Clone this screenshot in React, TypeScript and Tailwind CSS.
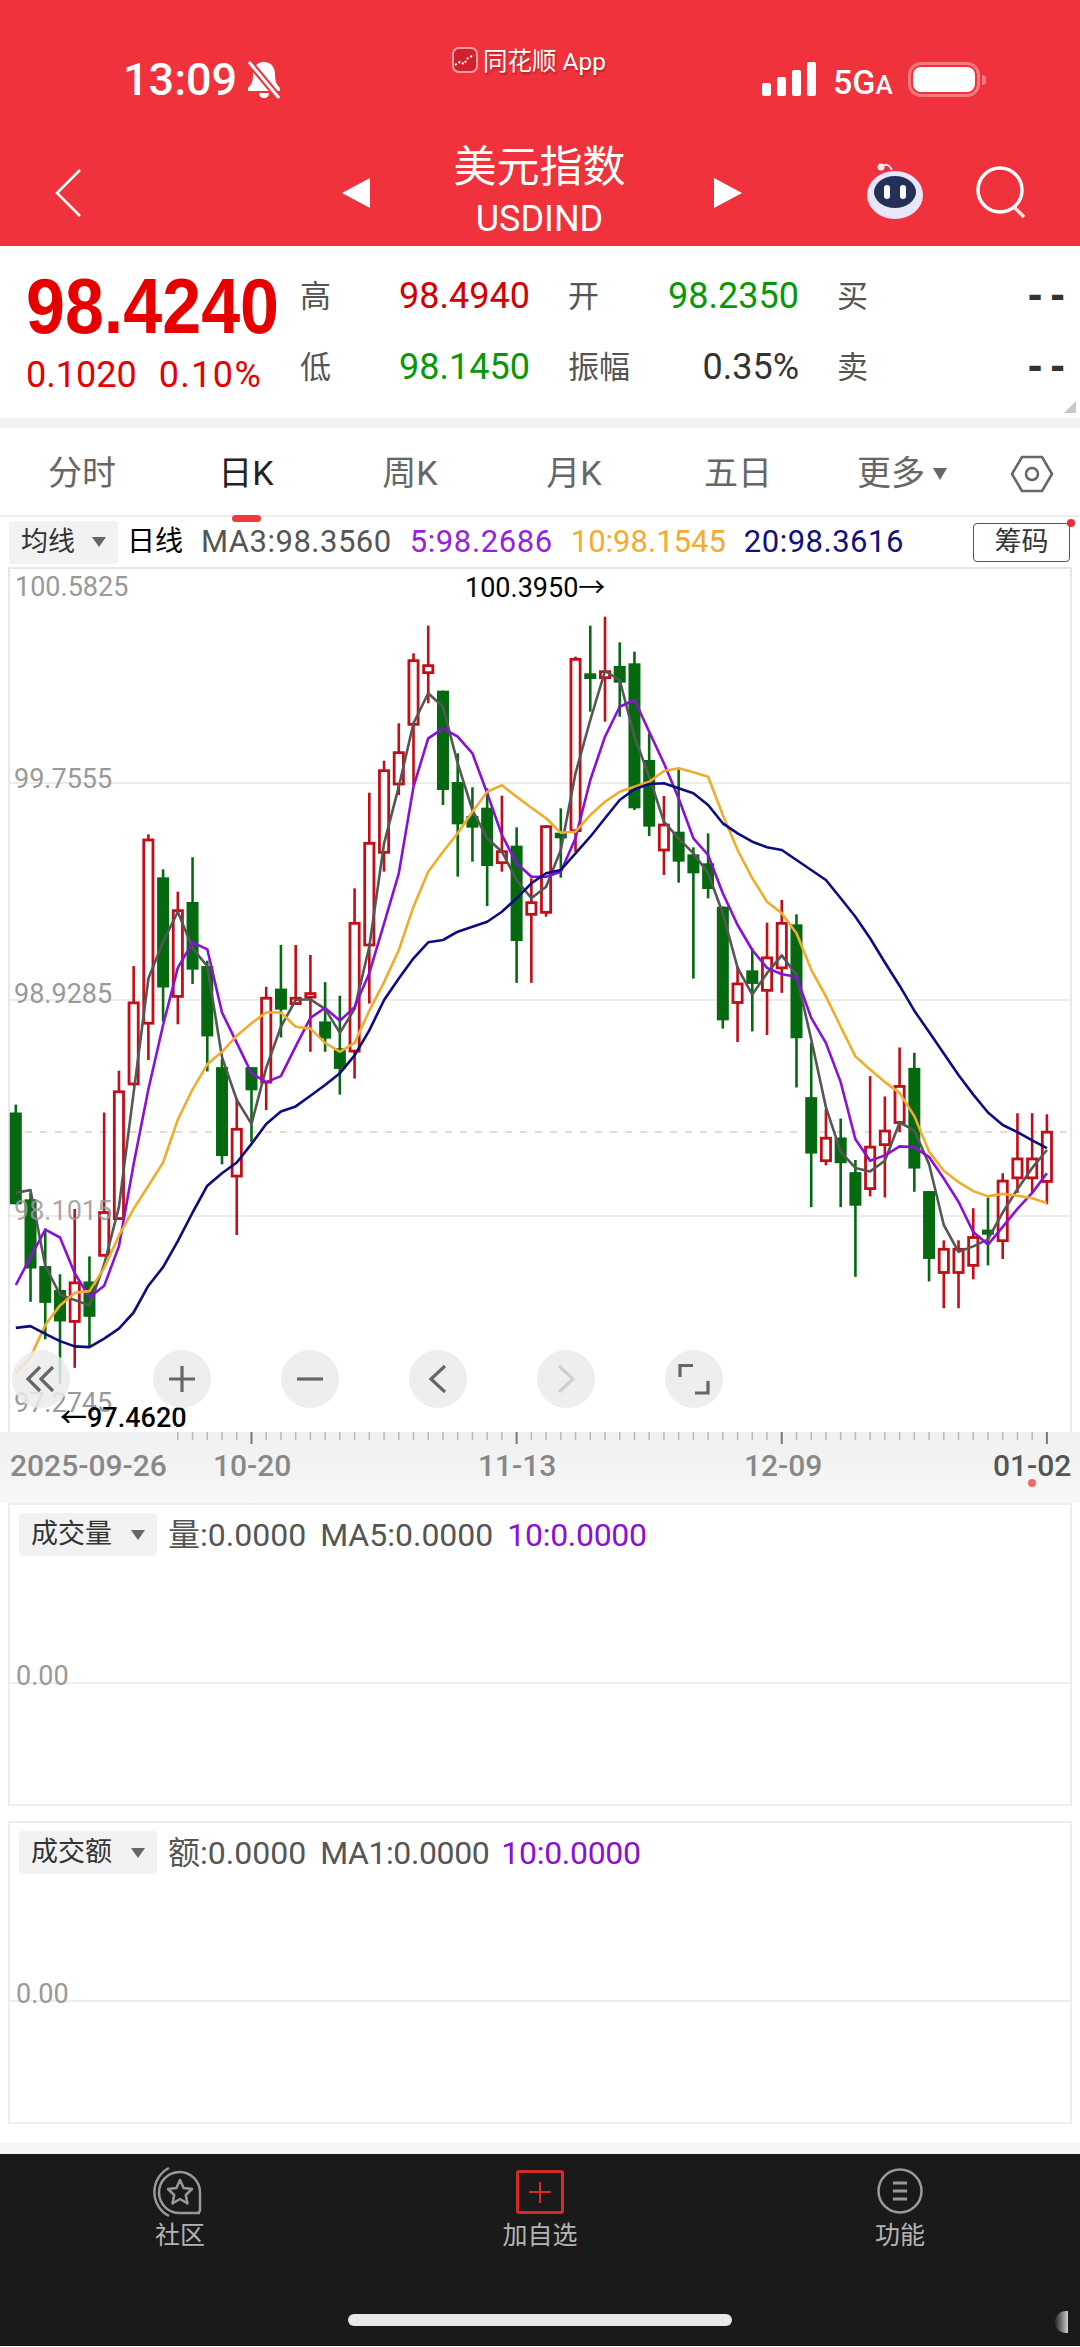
// y positions were read off two crops of the chart, so keep both scales around
const u = (z: number) => 510 + z / 3;
const v = (z: number) => 950 + z / 2.8;
const cx = (i: number) => 15.8 + i * 14.73;

type Candle = [up: boolean, high: number, top: number, bottom: number, low: number];

const candles: Candle[] = [
  [false, v(433), v(455), v(712), v(712)],
  [false, v(680), v(698), v(892), v(985)],
  [false, v(780), v(885), v(988), v(1090)],
  [false, v(908), v(952), v(1040), v(1215)],
  [true, v(725), v(932), v(1040), v(1170)],
  [false, v(858), v(928), v(1027), v(1112)],
  [true, v(455), v(735), v(855), v(855)],
  [true, v(338), v(397), v(752), v(752)],
  [true, v(45), v(148), v(375), v(380)],
  [true, u(973), u(990), v(205), v(308)],
  [false, u(1078), u(1102), v(105), v(200)],
  [true, u(1145), u(1202), v(130), v(208)],
  [false, u(1042), u(1176), v(55), v(95)],
  [false, v(30), v(45), v(242), v(340)],
  [false, v(305), v(328), v(577), v(600)],
  [true, v(415), v(502), v(633), v(798)],
  [false, v(328), v(328), v(393), v(538)],
  [true, v(103), v(135), v(370), v(448)],
  [false, u(1305), v(108), v(167), v(245)],
  [true, u(1305), v(135), v(150), v(150)],
  [true, u(1335), v(122), v(132), v(285)],
  [false, v(90), v(200), v(248), v(285)],
  [false, v(128), v(275), v(333), v(405)],
  [true, u(1135), u(1240), v(283), v(360)],
  [true, u(848), u(1000), u(1305), v(150)],
  [true, u(752), u(782), u(1027), u(1085)],
  [true, u(640), u(728), u(822), u(855)],
  [true, u(430), u(452), u(643), u(825)],
  [true, u(347), u(467), u(488), u(580)],
  [false, u(542), u(542), u(840), u(885)],
  [false, u(730), u(816), u(943), u(1100)],
  [false, u(832), u(918), u(953), u(1055)],
  [false, u(835), u(893), u(1068), u(1188)],
  [true, u(857), u(1025), u(1058), u(1085)],
  [false, u(952), u(1007), u(1293), v(92)],
  [true, u(1105), u(1178), u(1213), v(92)],
  [true, u(945), u(950), u(1207), u(1220)],
  [false, u(895), u(968), u(985), u(1103)],
  [true, u(440), u(448), u(962), u(1025)],
  [false, u(347), u(490), u(507), u(605)],
  [true, u(320), u(485), u(503), u(635)],
  [false, u(397), u(468), u(518), u(620)],
  [false, u(425), u(460), u(895), u(900)],
  [false, u(670), u(750), u(950), u(978)],
  [true, u(858), u(945), u(1020), u(1095)],
  [false, u(778), u(965), u(1055), u(1118)],
  [false, u(1012), u(1033), u(1090), v(80)],
  [false, u(970), u(1060), u(1137), u(1165)],
  [false, u(1190), u(1190), v(197), v(220)],
  [true, v(45), v(95), v(147), v(258)],
  [false, u(1315), v(57), v(95), v(228)],
  [true, u(1238), v(22), v(113), v(238)],
  [true, u(1170), u(1240), v(50), v(120)],
  [false, u(1213), u(1243), v(247), v(385)],
  [false, v(260), v(412), v(570), v(720)],
  [true, v(445), v(527), v(590), v(603)],
  [false, v(472), v(525), v(597), v(720)],
  [false, v(588), v(622), v(716), v(915)],
  [true, v(353), v(552), v(668), v(690)],
  [true, v(410), v(507), v(545), v(693)],
  [true, v(273), v(382), v(483), v(510)],
  [false, v(288), v(330), v(612), v(677)],
  [false, v(675), v(675), v(865), v(928)],
  [true, v(813), v(838), v(903), v(1003)],
  [true, v(813), v(838), v(903), v(1003)],
  [true, v(723), v(805), v(883), v(922)],
  [false, v(693), v(783), v(797), v(883)],
  [true, v(625), v(647), v(814), v(865)],
  [true, v(457), v(585), v(638), v(680)],
  [true, v(457), v(585), v(638), v(680)],
  [true, v(460), v(510), v(648), v(712)],
];

const ma3 = [
  v(680), v(672), v(885), v(965), v(980), v(995), v(880), v(720), v(400), v(80),
  u(1295), u(1205), u(1315), v(45), v(300), v(420), v(487), v(330), v(215), v(140),
  v(138), v(165), v(232), v(165), u(1310), u(1000), u(830), u(640), u(550), u(590),
  u(760), u(900), u(985), u(1025), u(1110), u(1165), u(1130), u(1020), u(790), u(630),
  u(483), u(510), u(680), u(800), u(935), u(985), u(1030), u(1090), u(1210), v(50),
  v(125), v(65), v(15), v(70), v(250), v(440), v(565), v(610), v(620), v(590),
  v(483), v(505), v(600), v(770), v(845), v(830), v(810), v(735), v(670), v(610), v(560),
];

const ma5 = [
  v(938), v(860), v(783), v(805), v(905), v(972), v(940), v(830), v(600), v(390),
  v(210), v(50), u(1297), u(1318), v(175), v(260), v(345), v(370), v(353), v(270),
  v(190), v(162), v(198), v(160), v(65), u(1240), u(1090), u(830), u(685), u(655),
  u(680), u(730), u(850), u(975), u(1060), u(1100), u(1100), u(1085), u(985), u(810),
  u(680), u(590), u(570), u(665), u(760), u(865), u(985), u(1035), u(1150), u(1245),
  u(1320), v(50), v(68), v(75), v(190), v(260), v(370), v(530), v(590), v(575),
  v(550), v(552), v(580), v(640), v(705), v(790), v(825), v(775), v(725), v(680), v(625),
];

const ma10 = [
  v(1185), v(1140), v(1050), v(995), v(960), v(955), v(890), v(800), v(725), v(660),
  v(595), v(475), v(390), v(320), v(285), v(240), v(205), v(175), v(175), v(215),
  v(220), v(260), v(285), v(260), v(170), v(90), v(0), u(1190), u(1085), u(1025),
  u(970), u(905), u(845), u(826), u(860), u(893), u(925), u(968), u(965), u(915),
  u(875), u(845), u(830), u(815), u(783), u(775), u(787), u(800), u(915), u(1020),
  u(1105), u(1175), u(1210), u(1270), v(55), v(130), v(215), v(298), v(335), v(370),
  v(400), v(465), v(565), v(618), v(650), v(675), v(690), v(683), v(688), v(695), v(708),
];

const ma20 = [
  v(1058), v(1053), v(1075), v(1095), v(1110), v(1112), v(1088), v(1060), v(1015), v(940),
  v(888), v(815), v(735), v(660), v(625), v(595), v(543), v(487), v(452), v(438),
  v(408), v(378), v(345), v(295), v(225), v(140), v(80), u(1345), u(1297), u(1290),
  u(1265), u(1250), u(1235), u(1205), u(1165), u(1120), u(1090), u(1080), u(1030), u(980),
  u(925), u(870), u(838), u(822), u(820), u(835), u(850), u(885), u(940), u(970),
  u(995), u(1012), u(1020), u(1050), u(1080), u(1110), u(1165), u(1220), u(1285), v(35),
  v(100), v(170), v(230), v(290), v(350), v(405), v(455), v(490), v(510), v(533), v(555),
];

const pts = (ys: number[]) => ys.map((y, i) => `${cx(i).toFixed(1)},${y.toFixed(1)}`).join(" ");

function CandleChart() {
  return (
    <svg viewBox="0 567 1080 865" className="block h-[865px] w-[1080px]">
      <rect x="9" y="568" width="1062" height="880" fill="none" stroke="#e8e8e8" strokeWidth="2" />
      <line x1="10" x2="1070" y1="783" y2="783" stroke="#e6e6e6" strokeWidth="1.5" />
      <line x1="10" x2="1070" y1="1000" y2="1000" stroke="#e6e6e6" strokeWidth="1.5" />
      <line x1="10" x2="1070" y1="1216" y2="1216" stroke="#e6e6e6" strokeWidth="1.5" />
      <line x1="10" x2="1070" y1="1132" y2="1132" stroke="#dcb596" strokeWidth="1.2" strokeDasharray="7 8" />
      {candles.map(([up, high, top, bottom, low], i) => {
        const color = up ? "#c20e16" : "#056a0f";
        const x = cx(i);
        return (
          <g key={i}>
            <line x1={x} x2={x} y1={high} y2={low} stroke={color} strokeWidth="2.6" />
            {up ? (
              <rect x={x - 4.6} y={top} width="9.2" height={bottom - top} fill="#fff" stroke={color} strokeWidth="2.8" />
            ) : (
              <rect x={x - 6} y={top} width="12" height={bottom - top} fill={color} />
            )}
          </g>
        );
      })}
      <polyline points={pts(ma3)} fill="none" stroke="#565656" strokeWidth="2.6" strokeLinejoin="round" />
      <polyline points={pts(ma5)} fill="none" stroke="#8a10d8" strokeWidth="2.6" strokeLinejoin="round" />
      <polyline points={pts(ma10)} fill="none" stroke="#f0ac2a" strokeWidth="2.6" strokeLinejoin="round" />
      <polyline points={pts(ma20)} fill="none" stroke="#0b0b82" strokeWidth="2.6" strokeLinejoin="round" />
    </svg>
  );
}

function XAxis() {
  const ticks = candles.map((_, i) => i).filter((i) => i >= 11);
  return (
    <div className="h-[71px] bg-gradient-to-b from-[#f0f0f0] to-[#f7f7f7]">
      <svg viewBox="0 1432 1080 71" className="block h-[71px] w-[1080px]">
        {ticks.map((i) => {
          const major = i === 16 || i === 34 || i === 52 || i === 70;
          return (
            <line
              key={i}
              x1={cx(i)}
              x2={cx(i)}
              y1="1432"
              y2={major ? 1444 : 1440}
              stroke={major ? "#777" : "#b8b8b8"}
              strokeWidth={major ? 2 : 1.5}
            />
          );
        })}
        <circle cx="1032" cy="1483" r="4" fill="#f0686a" />
      </svg>
    </div>
  );
}

function DropBox({ label, width }: { label: string; width: string }) {
  return (
    <div className={`flex h-[43px] items-center justify-between rounded-[4px] bg-[#f2f2f2] pl-[12px] pr-[12px] text-[27px] text-[#333] ${width}`}>
      <span>{label}</span>
      <svg width="14" height="10" viewBox="0 0 14 10">
        <polygon points="0,0 14,0 7,10" fill="#666" />
      </svg>
    </div>
  );
}

function Panel({ label, stat, ma, maClass, tenClass }: { label: string; stat: string; ma: string; maClass: string; tenClass: string }) {
  return (
    <div className="relative mx-[8px] h-[303px] w-[1064px] border-2 border-[#eeeeee] bg-white">
      <div className="flex items-center pl-[9px] pt-[7px] text-[32px] leading-[43px] text-[#555]">
        <DropBox label={label} width="w-[138px]" />
        <span className="ml-[11px] mt-[2px]">{stat}</span>
        <span className={`ml-[14px] mt-[2px] ${maClass}`}>{ma}</span>
        <span className={`mt-[2px] tracking-[-0.3px] text-[#8a10d8] ${tenClass}`}>10:0.0000</span>
      </div>
      <div className="absolute left-0 right-0 top-[177px] h-[2px] bg-[#eeeeee]" />
      <span className="absolute left-[6px] top-[155px] text-[27px] leading-[32px] text-[#999]">0.00</span>
    </div>
  );
}

export default function App() {
  return (
    <div className="h-[2347px] w-[1080px] overflow-hidden bg-white [font-family:Roboto,'Noto_Sans_CJK_SC',sans-serif]">
      {/* red header */}
      <header className="h-[246px] bg-[#f0323c] text-white">
        <div className="flex h-[140px]">
          <div className="flex w-[430px] items-start pl-[123px] pt-[54px]">
            <span className="text-[45px] font-medium leading-[52px]">13:09</span>
            <svg width="38" height="40" viewBox="0 0 38 40" className="ml-[8px] mt-[6px]">
              <path d="M19 2c-7 0-11 5-11 12 0 8-2 11-5 14v3h32v-3c-3-3-5-6-5-14 0-7-4-12-11-12z" fill="#fff" />
              <path d="M14 33c0 3 2 5 5 5s5-2 5-5z" fill="#fff" />
              <line x1="4" y1="2" x2="34" y2="38" stroke="#f0323c" strokeWidth="7" />
              <line x1="4" y1="2" x2="34" y2="38" stroke="#fff" strokeWidth="3" />
            </svg>
          </div>
          <div className="flex w-[280px] items-start pl-[22px] pt-[47px]">
            <svg width="26" height="26" viewBox="0 0 26 26">
              <rect x="1" y="1" width="24" height="24" rx="6" fill="#d3202a" stroke="#f9a0a4" strokeWidth="2" />
              <path d="M3 18l5-3 4 2 4-6 6-3" fill="none" stroke="#fff" strokeWidth="2" strokeDasharray="2 2" />
            </svg>
            <span className="ml-[5px] text-[24.5px] leading-[30px] [text-shadow:1px_2px_2px_rgba(120,0,0,0.45)]">同花顺 App</span>
          </div>
          <div className="flex flex-1 items-start pl-[52px] pt-[62px]">
            <div className="flex h-[34px] items-end gap-[6px]">
              <span className="h-[13px] w-[9px] rounded-[2px] bg-white" />
              <span className="h-[19px] w-[9px] rounded-[2px] bg-white" />
              <span className="h-[26px] w-[9px] rounded-[2px] bg-white" />
              <span className="h-[34px] w-[9px] rounded-[2px] bg-white" />
            </div>
            <span className="ml-[17px] mt-[1px] text-[34px] font-medium leading-[38px]">
              5G<span className="text-[26px]">A</span>
            </span>
            <div className="ml-[15px] flex items-center">
              <div className="h-[35px] w-[72px] rounded-[13px] border-[3px] border-[#f7787f] p-[2px]">
                <div className="h-full rounded-[8px] bg-white" />
              </div>
              <div className="ml-[2px] h-[10px] w-[4px] rounded-r-[3px] bg-[#f7787f]" />
            </div>
          </div>
        </div>
        <div className="flex h-[106px] items-center">
          <div className="flex w-[342px] items-center pl-[54px]">
            <svg width="28" height="50" viewBox="0 0 28 50">
              <polyline points="26,2 3,25 26,48" fill="none" stroke="#fff" strokeWidth="2.5" />
            </svg>
          </div>
          <svg width="28" height="30" viewBox="0 0 28 30">
            <polygon points="28,0 28,30 0,15" fill="#fff" />
          </svg>
          <div className="flex w-[344px] flex-col items-center pr-[5px]">
            <span className="mt-[-5px] text-[43px] leading-[50px]">美元指数</span>
            <span className="mt-[7px] text-[36px] leading-[40px]">USDIND</span>
          </div>
          <svg width="28" height="30" viewBox="0 0 28 30">
            <polygon points="0,0 0,30 28,15" fill="#fff" />
          </svg>
          <svg width="62" height="58" viewBox="0 0 62 58" className="ml-[122px] mt-[-5px]">
            <path d="M18 8c-1-5 5-7 8-3l2 3" fill="none" stroke="#e8e4f6" strokeWidth="2" />
            <circle cx="17" cy="5" r="3.5" fill="#eceaf8" />
            <ellipse cx="31" cy="33" rx="28" ry="24" fill="#e8e6f8" />
            <ellipse cx="31" cy="30" rx="21" ry="16" fill="#243055" />
            <rect x="20" y="23" width="6" height="14" rx="3" fill="#fff" />
            <rect x="36" y="23" width="6" height="14" rx="3" fill="#fff" />
          </svg>
          <svg width="54" height="54" viewBox="0 0 54 54" className="ml-[50px]">
            <circle cx="24" cy="24" r="22" fill="none" stroke="#fff" strokeWidth="3.5" />
            <line x1="38" y1="41" x2="48" y2="51" stroke="#ffe3e3" strokeWidth="3.5" />
          </svg>
        </div>
      </header>

      {/* quote block */}
      <section className="relative flex h-[172px]">
        <div className="w-[300px] pl-[26px] pt-[24px] text-[#e60000]">
          <div className="origin-center scale-y-[1.12] text-[70px] font-bold leading-[72px] [font-family:'Liberation_Sans',sans-serif]">98.4240</div>
          <div className="mt-[13px] flex text-[36px] leading-[40px]">
            <span>0.1020</span>
            <span className="ml-[22px] tracking-[1.4px]">0.10%</span>
          </div>
        </div>
        <div className="flex flex-col pt-[15px] text-[36px] leading-[71px]">
          {[
            ["高", "98.4940", "text-[#d40000]", "开", "98.2350", "text-[#059a05]", "买"],
            ["低", "98.1450", "text-[#059a05]", "振幅", "0.35%", "text-[#333]", "卖"],
          ].map(([a, b, bc, c, d, dc, e]) => (
            <div key={a} className="flex h-[71px] items-center">
              <div className="flex w-[230px] justify-between">
                <span className="text-[31px] text-[#555]">{a}</span>
                <span className={bc}>{b}</span>
              </div>
              <div className="ml-[38px] flex w-[231px] justify-between">
                <span className="text-[31px] text-[#555]">{c}</span>
                <span className={dc}>{d}</span>
              </div>
              <div className="ml-[38px] flex w-[228px] justify-between">
                <span className="text-[31px] text-[#555]">{e}</span>
                <span className="mr-[-8px] mt-[-3px] text-[44px] font-bold tracking-[8px] text-[#333] [font-family:'Liberation_Sans',sans-serif]">--</span>
              </div>
            </div>
          ))}
        </div>
        <svg width="12" height="12" viewBox="0 0 12 12" className="absolute bottom-[5px] right-[4px]">
          <polygon points="12,0 12,12 0,12" fill="#c8c8c8" />
        </svg>
      </section>
      <div className="h-[10px] bg-[#f2f2f2]" />

      {/* period tabs */}
      <nav className="relative grid h-[89px] grid-cols-[repeat(6,164px)_96px] items-center border-b-2 border-[#eeeeee] pt-[4px] text-[34px] text-[#666]">
        <span className="text-center">分时</span>
        <span className="relative text-center text-[#222]">
          日K
          <span className="absolute bottom-[-23px] left-[68px] h-[7px] w-[29px] rounded-[4px] bg-[#ee3a3a]" />
        </span>
        <span className="text-center">周K</span>
        <span className="text-center">月K</span>
        <span className="text-center">五日</span>
        <span className="flex items-center justify-center gap-[8px]">
          更多
          <svg width="14" height="12" viewBox="0 0 14 12">
            <polygon points="0,0 14,0 7,12" fill="#666" />
          </svg>
        </span>
        <svg width="44" height="38" viewBox="0 0 44 38" className="justify-self-center">
          <polygon points="12,2 32,2 42,19 32,36 12,36 2,19" fill="none" stroke="#666" strokeWidth="2.5" strokeLinejoin="round" />
          <circle cx="22" cy="19" r="6" fill="none" stroke="#666" strokeWidth="2.5" />
        </svg>
      </nav>

      {/* MA legend */}
      <div className="relative flex h-[50px] items-center pl-[9px] text-[31px]">
        <DropBox label="均线" width="w-[109px]" />
        <span className="ml-[9px] text-[28px] text-black">日线</span>
        <span className="ml-[18px] tracking-[0.5px] text-[#555]">MA3:98.3560</span>
        <span className="ml-[18px] tracking-[0.6px] text-[#9a1ee0]">5:98.2686</span>
        <span className="ml-[18px] text-[#f5ab2e]">10:98.1545</span>
        <span className="ml-[18px] tracking-[0.5px] text-[#10107f]">20:98.3616</span>
        <button className="absolute left-[973px] top-[6px] flex h-[39px] w-[97px] items-center justify-center rounded-[4px] border border-[#555] text-[27px] text-[#333]">
          筹码
        </button>
        <span className="absolute left-[1067px] top-[2px] size-[8px] rounded-full bg-[#ee2a3a]" />
      </div>

      {/* k-line chart with overlaid labels and zoom buttons */}
      <div className="relative h-[865px]">
        <CandleChart />
        <span className="absolute left-[15px] top-[4px] text-[27px] leading-[32px] text-[#999]">100.5825</span>
        <span className="absolute left-[14px] top-[196px] text-[27px] leading-[32px] text-[#999]">99.7555</span>
        <span className="absolute left-[14px] top-[411px] text-[27px] leading-[32px] text-[#999]">98.9285</span>
        <span className="absolute left-[14px] top-[628px] text-[27px] leading-[32px] text-[#999]/85">98.1015</span>
        <span className="absolute left-[14px] top-[820px] text-[27px] leading-[32px] text-[#999]">97.2745</span>
        <span className="absolute left-[465px] top-[5px] text-[27px] leading-[32px] text-black">100.3950→</span>
        <span className="absolute left-[60px] top-[835px] text-[27px] font-medium leading-[32px] text-black">←97.4620</span>
        <div className="absolute left-[12px] top-[783px] flex gap-[70px]">
          {[
            <path key="a" d="M17 6 5 18l12 12M30 6 18 18l12 12" />,
            <path key="b" d="M18 5v26M5 18h26" />,
            <path key="c" d="M5 18h26" />,
            <path key="d" d="M25 5 11 18l14 13" />,
            <path key="e" d="M11 5l14 13-14 13" stroke="#cfcfcf" />,
            <path key="f" d="M4 16V4.500H17M32 20v12H19" />,
          ].map((icon, i) => (
            <div key={i} className={`flex size-[58px] items-center justify-center rounded-full bg-[#ebebeb]/85 ${i === 1 ? "ml-[12.5px]" : ""}`}>
              <svg width="36" height="36" viewBox="0 0 36 36" fill="none" stroke="#666" strokeWidth="3.2">
                {icon}
              </svg>
            </div>
          ))}
        </div>
      </div>

      {/* date axis */}
      <div className="relative">
        <XAxis />
        <div className="absolute inset-0 text-[30px] font-medium leading-[36px] text-[#888]">
          <span className="absolute left-[10px] top-[16px]">2025-09-26</span>
          <span className="absolute left-[213px] top-[16px]">10-20</span>
          <span className="absolute left-[478px] top-[16px]">11-13</span>
          <span className="absolute left-[744px] top-[16px]">12-09</span>
          <span className="absolute left-[993px] top-[16px] text-[#555]">01-02</span>
        </div>
      </div>

      {/* volume + amount panels */}
      <Panel label="成交量" stat="量:0.0000" ma="MA5:0.0000" maClass="" tenClass="ml-[14px]" />
      <div className="h-[15px]" />
      <Panel label="成交额" stat="额:0.0000" ma="MA1:0.0000" maClass="tracking-[-0.4px]" tenClass="ml-[12px]" />
      <div className="h-[19px]" />
      <div className="h-[11px] bg-[#f5f5f5]" />

      {/* bottom bar */}
      <footer className="relative h-[192px] bg-[#1a1a1a] text-[25px] text-[#b4b4b4]">
        <div className="grid grid-cols-3 pt-[11px]">
          <div className="flex flex-col items-center">
            <svg width="60" height="54" viewBox="0 0 60 54" fill="none" stroke="#999" strokeWidth="2.5">
              <path d="M19 3A27 27 0 0 0 19 51" />
              <path d="M50 48H30A20.5 20.5 0 1 1 50 27.5V45a3 3 0 0 1-3 3z" />
              <polygon
                points="30,15 33.6,23 42,24 35.8,30 37.5,38.5 30,34 22.5,38.5 24.2,30 18,24 26.4,23"
                strokeLinejoin="round"
              />
            </svg>
            <span className="leading-[34px]">社区</span>
          </div>
          <div className="flex flex-col items-center">
            <svg width="48" height="54" viewBox="0 0 48 54" fill="none" stroke="#d62a2a">
              <rect x="1.5" y="6.5" width="45" height="41" rx="1.5" strokeWidth="3" />
              <path d="M24 17v21M13 27h22" strokeWidth="2" />
            </svg>
            <span className="leading-[34px]">加自选</span>
          </div>
          <div className="flex flex-col items-center">
            <svg width="48" height="54" viewBox="0 0 48 54" fill="none" stroke="#999" strokeWidth="2.5">
              <circle cx="24" cy="26" r="21.5" />
              <path d="M17 18h14M17 26h14M17 34h14" strokeWidth="3" />
            </svg>
            <span className="leading-[34px]">功能</span>
          </div>
        </div>
        <div className="absolute left-[348px] top-[160px] h-[12px] w-[384px] rounded-full bg-[#e8e8e8]" />
        <div className="absolute left-[1055px] top-[157px] h-[22px] w-[13px] rounded-l-full bg-gradient-to-l from-[#cfcfcf] to-[#2a2a2a]" />
      </footer>
    </div>
  );
}
